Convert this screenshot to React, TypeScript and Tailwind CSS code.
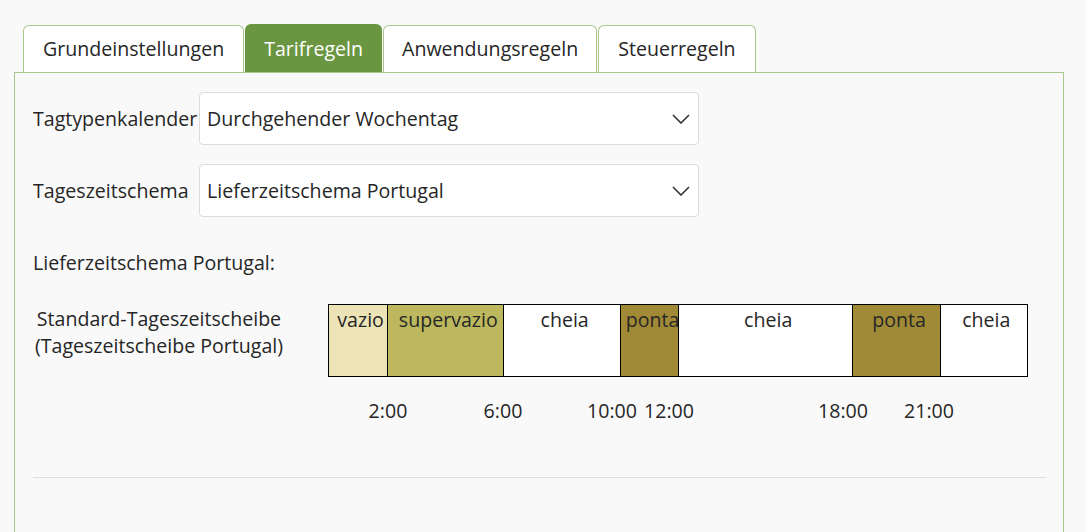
import React from 'react';

const tabs = [
  { label: 'Grundeinstellungen', pad: 'px-[19px]' },
  { label: 'Tarifregeln', pad: 'px-[18px]' },
  { label: 'Anwendungsregeln', pad: 'px-[18px]' },
  { label: 'Steuerregeln', pad: 'px-[19px]' },
];

const segments = [
  { label: 'vazio', hours: 2, color: 'bg-[#ece4b6]' },
  { label: 'supervazio', hours: 4, color: 'bg-[#bdb85e]' },
  { label: 'cheia', hours: 4, color: 'bg-white' },
  { label: 'ponta', hours: 2, color: 'bg-[#a18a36]' },
  { label: 'cheia', hours: 6, color: 'bg-white' },
  { label: 'ponta', hours: 3, color: 'bg-[#a18a36]' },
  { label: 'cheia', hours: 3, color: 'bg-white' },
];

// label centers, px from the bar's left edge
const ticks = [
  { label: '2:00', at: 60 },
  { label: '6:00', at: 175 },
  { label: '10:00', at: 284 },
  { label: '12:00', at: 341 },
  { label: '18:00', at: 515 },
  { label: '21:00', at: 601 },
];

const BAR_INNER = 698;

function Chevron() {
  return (
    <svg width="18" height="10" viewBox="0 0 18 10" fill="none">
      <path d="M1 1l8 8 8-8" stroke="#333" strokeWidth="1.6" />
    </svg>
  );
}

function SelectRow({ label, value }: { label: string; value: string }) {
  return (
    <div className="flex items-center">
      <div className="w-[166px] whitespace-nowrap">{label}</div>
      <div className="w-[500px] h-[53px] bg-white border border-[#dcdcdc] rounded-[4px] flex items-center justify-between pl-[7px] pr-[8px]">
        <span>{value}</span>
        <Chevron />
      </div>
    </div>
  );
}

export default function App() {
  return (
    <div className="min-h-screen bg-[#f9f9f9] pt-[24px] pl-[14px] pr-[22px] text-[19.6px] leading-[27px] text-[#262626] font-['Open_Sans',sans-serif] overflow-hidden">
      {/* Tabs */}
      <div className="flex items-end gap-[1px] pl-[9px]">
        {tabs.map((t) => {
          const active = t.label === 'Tarifregeln';
          return (
            <div
              key={t.label}
              className={
                active
                  ? `h-[48px] ${t.pad} pb-[1px] flex items-center rounded-t-[6px] border border-b-0 border-[#6a9641] bg-[#6a9641] text-white`
                  : `h-[47px] ${t.pad} pb-[1px] flex items-center rounded-t-[6px] border border-b-0 border-[#a8c68e] bg-white`
              }
            >
              {t.label}
            </div>
          );
        })}
      </div>

      {/* Panel */}
      <div className="h-[600px] border border-[#a8c68e] bg-[#f9f9f9] pt-[19px] pl-[18px] pr-[17px]">
        <SelectRow label="Tagtypenkalender" value="Durchgehender Wochentag" />
        <div className="mt-[19px]">
          <SelectRow label="Tageszeitschema" value="Lieferzeitschema Portugal" />
        </div>

        <div className="mt-[32px]">Lieferzeitschema Portugal:</div>

        <div className="flex mt-[28px]">
          <div className="w-[252px] text-center pt-[1px] whitespace-nowrap">
            Standard-Tageszeitscheibe
            <br />
            (Tageszeitscheibe Portugal)
          </div>
          <div className="ml-[43px]">
            <div className="w-[700px] h-[73px] border border-black flex">
              {segments.map((s, i) => (
                <div
                  key={i}
                  className={`${s.color} ${i > 0 ? 'border-l border-black' : ''} flex-none overflow-hidden whitespace-nowrap text-center pl-[5px] pt-[1px]`}
                  style={{ width: (s.hours * BAR_INNER) / 24 }}
                >
                  {s.label}
                </div>
              ))}
            </div>
            <div className="relative h-[27px] mt-[20px]">
              {ticks.map((t) => (
                <span
                  key={t.label}
                  className="absolute top-0 -translate-x-1/2 whitespace-nowrap"
                  style={{ left: t.at }}
                >
                  {t.label}
                </span>
              ))}
            </div>
          </div>
        </div>

        <div className="mt-[53px] border-t border-[#dedede]" />
      </div>
    </div>
  );
}
